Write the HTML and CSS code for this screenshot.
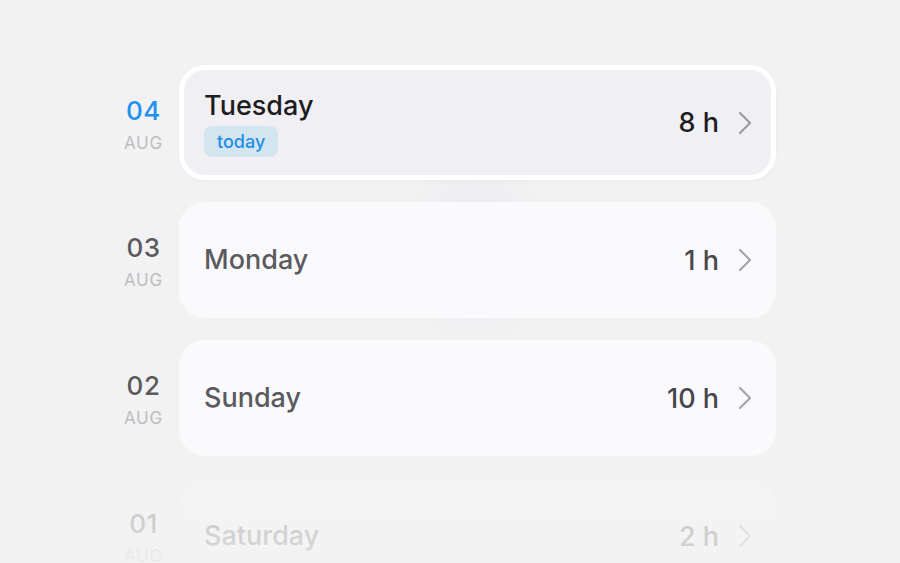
FILE: index.html
```html
<!DOCTYPE html>
<html>
<head>
<meta charset="utf-8">
<link rel="stylesheet" href="styles.css">
</head>
<body>
<div class="screen">
  <div class="glow"></div>
  <div class="list">
    <div class="row">
      <div class="date current"><div class="num">04</div><div class="mon">AUG</div></div>
      <div class="card selected">
        <div class="left">
          <div class="day">Tuesday</div>
          <div class="badge">today</div>
        </div>
        <div class="right">
          <span class="hours">8 h</span>
          <svg class="chev" width="14" height="24" viewBox="0 0 14 24"><polyline points="2,2 12,12 2,22" fill="none" stroke="#9d9da1" stroke-width="2.2" stroke-linecap="round" stroke-linejoin="round"/></svg>
        </div>
      </div>
    </div>
    <div class="row">
      <div class="date"><div class="num">03</div><div class="mon">AUG</div></div>
      <div class="card">
        <div class="left"><div class="day">Monday</div></div>
        <div class="right">
          <span class="hours">1 h</span>
          <svg class="chev" width="14" height="24" viewBox="0 0 14 24"><polyline points="2,2 12,12 2,22" fill="none" stroke="#a5a5a9" stroke-width="2.2" stroke-linecap="round" stroke-linejoin="round"/></svg>
        </div>
      </div>
    </div>
    <div class="row">
      <div class="date"><div class="num">02</div><div class="mon">AUG</div></div>
      <div class="card">
        <div class="left"><div class="day">Sunday</div></div>
        <div class="right">
          <span class="hours">10 h</span>
          <svg class="chev" width="14" height="24" viewBox="0 0 14 24"><polyline points="2,2 12,12 2,22" fill="none" stroke="#a5a5a9" stroke-width="2.2" stroke-linecap="round" stroke-linejoin="round"/></svg>
        </div>
      </div>
    </div>
    <div class="row faded">
      <div class="date"><div class="num">01</div><div class="mon">AUG</div></div>
      <div class="card">
        <div class="left"><div class="day">Saturday</div></div>
        <div class="right">
          <span class="hours">2 h</span>
          <svg class="chev" width="14" height="24" viewBox="0 0 14 24"><polyline points="2,2 12,12 2,22" fill="none" stroke="#a5a5a9" stroke-width="2.2" stroke-linecap="round" stroke-linejoin="round"/></svg>
        </div>
      </div>
    </div>
  </div>
  <div class="fade"></div>
</div>
</body>
</html>
```
FILE: styles.css
```css
* { box-sizing: border-box; }
html, body { margin: 0; padding: 0; }
body {
  background: #f2f2f2;
  font-family: Inter, "Noto Sans", "Liberation Sans", sans-serif;
  width: 900px;
  height: 563px;
  overflow: hidden;
}
.screen {
  position: relative;
  width: 900px;
  height: 563px;
  overflow: hidden;
  background: #f2f2f2;
}
.glow {
  position: absolute;
  left: 400px;
  top: 150px;
  width: 150px;
  height: 200px;
  background: radial-gradient(ellipse at center, rgba(232,230,245,0.9) 0%, rgba(242,242,242,0) 70%);
}
.list {
  position: relative;
  display: flex;
  flex-direction: column;
  gap: 22px;
  padding-top: 65px;
  padding-left: 108px;
}
.row {
  display: flex;
  align-items: center;
}
.date {
  width: 71px;
  display: flex;
  flex-direction: column;
  align-items: center;
  gap: 8px;
  margin-top: 4px;
}
.num {
  font-size: 26px;
  font-weight: 500;
  color: #5a5a5e;
  line-height: 28px;
  letter-spacing: 0.5px;
}
.mon {
  font-size: 17px;
  font-weight: 400;
  color: #bdbdc0;
  line-height: 20px;
  letter-spacing: 0.8px;
}
.date.current .num { color: #2190f0; }
.card {
  width: 597px;
  height: 116px;
  border-radius: 26px;
  background: #fafafc;
  display: flex;
  align-items: center;
  justify-content: space-between;
  padding: 0 24px 0 25px;
}
.card.selected {
  height: 115px;
  background: #efeff4;
  border: 5px solid #ffffff;
  padding: 0 19px 0 20px;
  box-shadow: 0 1px 4px rgba(0,0,0,0.03);
}
.left {
  display: flex;
  flex-direction: column;
  align-items: flex-start;
  gap: 4px;
}
.selected .left { margin-top: 2px; }
.day {
  font-size: 27px;
  font-weight: 500;
  color: #5b5b5f;
  line-height: 32px;
}
.selected .day { color: #1d1d1f; }
.badge {
  background: #d3e6f0;
  color: #1f8de6;
  font-size: 18px;
  font-weight: 500;
  line-height: 31px;
  height: 31px;
  padding: 0 13px;
  border-radius: 8px;
}
.right {
  display: flex;
  align-items: center;
  gap: 19px;
}
.hours {
  font-size: 27px;
  font-weight: 500;
  color: #48484c;
}
.selected .hours { color: #1d1d1f; }
.chev { display: block; }
.faded { opacity: 0.35; }
.fade {
  position: absolute;
  left: 0;
  right: 0;
  bottom: 0;
  height: 110px;
  background: linear-gradient(to bottom, rgba(242,242,242,0) 0%, rgba(242,242,242,0.55) 100%);
}
```
